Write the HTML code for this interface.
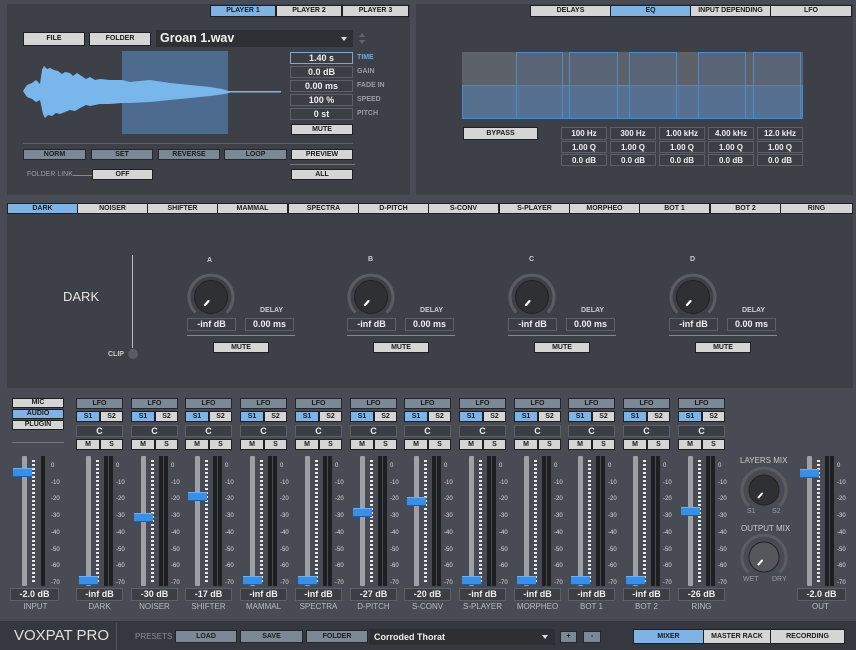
<!DOCTYPE html><html><head><meta charset="utf-8"><style>
*{margin:0;padding:0;box-sizing:border-box}
body{width:856px;height:650px;background:#484b53;position:relative;overflow:hidden;font-family:"Liberation Sans",sans-serif}
div,span{position:absolute}
.p{background:#3d4047}
.b{background:#d5d5d5;border:1px solid #1f2024;color:#1a1a1a;font-size:7px;font-weight:bold;text-align:center;line-height:9px}
.bl{background:#80b2e2}
.g{background:#7b8896;border:1px solid #25272b;color:#1a1a1a;font-size:7px;font-weight:bold;text-align:center;line-height:9px}
.v{border:1px solid #5d6067;color:#eee;font-size:9px;font-weight:bold;text-align:center;line-height:11px;background:#3b3e45}
.l{color:#9a9da3;font-size:7px;font-weight:bold}
.ch{top:0;width:47px;height:620px}
.trk{left:10px;top:456px;width:5px;height:130px;background:#9da0a5;border-radius:1px}
.dots{left:20px;top:460px;width:3px;height:122px;background:repeating-linear-gradient(#e8e8e8 0 2px,transparent 2px 4px)}
.m1{left:28px;top:456px;width:4px;height:130px;background:#1e1f23}
.m2{left:33px;top:456px;width:4px;height:130px;background:#1e1f23}
.sc{left:40px;top:458px;width:20px;color:#ddd;font-size:6px;line-height:16.7px}
.h{left:3px;width:19px;height:9px;background:#3a8ee6;border-top:1px solid #6fb0f0;border-bottom:1px solid #1d5ea8}
.nm{left:-12px;width:71px;top:602px;text-align:center;color:#b8bbc0;font-size:8px}
</style></head><body>

<!-- top left panel -->
<div class="p" style="left:7px;top:4px;width:403px;height:191px"></div>
<div class="b bl" style="left:210px;top:5px;width:66px;height:12px">PLAYER 1</div>
<div class="b" style="left:276px;top:5px;width:66px;height:12px">PLAYER 2</div>
<div class="b" style="left:342px;top:5px;width:67px;height:12px">PLAYER 3</div>
<div class="b" style="left:23px;top:32px;width:62px;height:14px;line-height:12px">FILE</div>
<div class="b" style="left:89px;top:32px;width:62px;height:14px;line-height:12px">FOLDER</div>
<div style="left:156px;top:30px;width:197px;height:17px;background:#2e3035;color:#f2f2f2;font-size:12.5px;font-weight:bold;line-height:17px;padding-left:4px">Groan 1.wav</div>
<div style="left:341px;top:37px;width:0;height:0;border-left:3px solid transparent;border-right:3px solid transparent;border-top:4px solid #ddd"></div>
<div style="left:359px;top:33px;width:0;height:0;border-left:3px solid transparent;border-right:3px solid transparent;border-bottom:4px solid #666"></div>
<div style="left:359px;top:40px;width:0;height:0;border-left:3px solid transparent;border-right:3px solid transparent;border-top:4px solid #666"></div>
<div style="left:122px;top:51px;width:106px;height:83px;background:#4c6b8f"></div>
<svg style="position:absolute;left:0;top:0" width="300" height="150">
<path fill="#79b6ec" d="M23,91 L27,85 L32,83 L36,80 L40,84 L42,70 L44,66 L47,69 L50,68 L54,70 L58,71 L62,74 L65,72 L70,73 L73,76 L77,73 L80,75 L86,79 L90,77 L95,80 L100,79 L110,80 L122,80 L130,82 L150,80 L170,83 L190,85 L210,87 L222,89 L232,92 L225,94 L210,96 L190,98 L170,100 L150,102 L130,103 L122,103 L110,104 L100,104 L90,106 L86,105 L80,108 L75,111 L70,110 L65,112 L60,114 L56,113 L52,116 L48,115 L45,118 L43,114 L40,100 L36,102 L32,99 L27,97 Z"/>
<rect x="228" y="91" width="53" height="1.5" fill="#79b6ec"/>
</svg>
<div class="v" style="left:290px;top:52px;width:63px;height:12px;border-color:#7aa9d6">1.40 s</div>
<div class="v" style="left:290px;top:66px;width:63px;height:12px">0.0 dB</div>
<div class="v" style="left:290px;top:80px;width:63px;height:12px">0.00 ms</div>
<div class="v" style="left:290px;top:94px;width:63px;height:12px">100 %</div>
<div class="v" style="left:290px;top:108px;width:63px;height:12px">0 st</div>
<div class="l" style="left:357px;top:54px;color:#6fa8e0">TIME</div>
<div class="l" style="left:357px;top:68px">GAIN</div>
<div class="l" style="left:357px;top:82px">FADE IN</div>
<div class="l" style="left:357px;top:96px">SPEED</div>
<div class="l" style="left:357px;top:110px">PITCH</div>
<div class="b" style="left:291px;top:124px;width:62px;height:11px">MUTE</div>
<div style="left:23px;top:143px;width:330px;height:1px;background:#5d6067"></div>
<div class="g" style="left:23px;top:149px;width:63px;height:11px">NORM</div>
<div class="g" style="left:91px;top:149px;width:62px;height:11px">SET</div>
<div class="g" style="left:158px;top:149px;width:62px;height:11px">REVERSE</div>
<div class="g" style="left:224px;top:149px;width:63px;height:11px">LOOP</div>
<div class="b" style="left:291px;top:149px;width:62px;height:11px">PREVIEW</div>
<div style="left:290px;top:164px;width:65px;height:1px;background:#777"></div>
<div class="l" style="left:27px;top:171px;font-weight:normal;font-size:7px">FOLDER LINK</div>
<div style="left:73px;top:175px;width:20px;height:1px;background:#888"></div>
<div class="b" style="left:92px;top:169px;width:61px;height:11px">OFF</div>
<div class="b" style="left:291px;top:169px;width:62px;height:11px">ALL</div>

<!-- top right panel -->
<div class="p" style="left:416px;top:4px;width:437px;height:191px"></div>
<div class="b" style="left:530px;top:5px;width:81px;height:12px">DELAYS</div>
<div class="b bl" style="left:610px;top:5px;width:81px;height:12px">EQ</div>
<div class="b" style="left:690px;top:5px;width:81px;height:12px">INPUT DEPENDING</div>
<div class="b" style="left:770px;top:5px;width:82px;height:12px">LFO</div>
<div style="left:462px;top:52px;width:341px;height:33px;background:#5d6168"></div>
<div style="left:462px;top:85px;width:341px;height:34px;background:#57708f;border:1px solid #4a8ad0"></div>
<div style="left:516px;top:52px;width:47px;height:67px;border:1px solid #4a8ad0;background:rgba(80,110,150,.25)"></div>
<div style="left:569px;top:52px;width:49px;height:67px;border:1px solid #4a8ad0;background:rgba(80,110,150,.25)"></div>
<div style="left:629px;top:52px;width:48px;height:67px;border:1px solid #4a8ad0;background:rgba(80,110,150,.25)"></div>
<div style="left:698px;top:52px;width:48px;height:67px;border:1px solid #4a8ad0;background:rgba(80,110,150,.25)"></div>
<div style="left:753px;top:52px;width:48px;height:67px;border:1px solid #4a8ad0;background:rgba(80,110,150,.25)"></div>
<div class="b" style="left:463px;top:127px;width:75px;height:13px;line-height:11px">BYPASS</div>
<div class="v" style="left:561px;top:127px;width:46px;height:13px;font-size:8px">100 Hz</div>
<div class="v" style="left:610px;top:127px;width:46px;height:13px;font-size:8px">300 Hz</div>
<div class="v" style="left:659px;top:127px;width:46px;height:13px;font-size:8px">1.00 kHz</div>
<div class="v" style="left:708px;top:127px;width:46px;height:13px;font-size:8px">4.00 kHz</div>
<div class="v" style="left:757px;top:127px;width:46px;height:13px;font-size:8px">12.0 kHz</div>
<div class="v" style="left:561px;top:141px;width:46px;height:12px;font-size:8px">1.00 Q</div>
<div class="v" style="left:610px;top:141px;width:46px;height:12px;font-size:8px">1.00 Q</div>
<div class="v" style="left:659px;top:141px;width:46px;height:12px;font-size:8px">1.00 Q</div>
<div class="v" style="left:708px;top:141px;width:46px;height:12px;font-size:8px">1.00 Q</div>
<div class="v" style="left:757px;top:141px;width:46px;height:12px;font-size:8px">1.00 Q</div>
<div class="v" style="left:561px;top:154px;width:46px;height:12px;font-size:8px">0.0 dB</div>
<div class="v" style="left:610px;top:154px;width:46px;height:12px;font-size:8px">0.0 dB</div>
<div class="v" style="left:659px;top:154px;width:46px;height:12px;font-size:8px">0.0 dB</div>
<div class="v" style="left:708px;top:154px;width:46px;height:12px;font-size:8px">0.0 dB</div>
<div class="v" style="left:757px;top:154px;width:46px;height:12px;font-size:8px">0.0 dB</div>

<!-- module panel -->
<div class="p" style="left:7px;top:203px;width:846px;height:185px"></div>
<div class="b bl" style="left:7px;top:203px;width:71px;height:11px">DARK</div>
<div class="b" style="left:77px;top:203px;width:71px;height:11px">NOISER</div>
<div class="b" style="left:147px;top:203px;width:71px;height:11px">SHIFTER</div>
<div class="b" style="left:217px;top:203px;width:71px;height:11px">MAMMAL</div>
<div class="b" style="left:288px;top:203px;width:71px;height:11px">SPECTRA</div>
<div class="b" style="left:358px;top:203px;width:71px;height:11px">D-PITCH</div>
<div class="b" style="left:428px;top:203px;width:71px;height:11px">S-CONV</div>
<div class="b" style="left:499px;top:203px;width:71px;height:11px">S-PLAYER</div>
<div class="b" style="left:569px;top:203px;width:71px;height:11px">MORPHEO</div>
<div class="b" style="left:639px;top:203px;width:71px;height:11px">BOT 1</div>
<div class="b" style="left:710px;top:203px;width:71px;height:11px">BOT 2</div>
<div class="b" style="left:780px;top:203px;width:73px;height:11px">RING</div>
<div style="left:63px;top:289px;color:#e6e6e6;font-size:13px">DARK</div>
<div style="left:132px;top:255px;width:1px;height:93px;background:#bbb"></div>
<div class="l" style="left:108px;top:351px;color:#ccc">CLIP</div>
<div style="left:128px;top:349px;width:10px;height:10px;border-radius:50%;background:#5a5c62"></div>

<svg style="position:absolute;left:0;top:0" width="856" height="650">
<defs><g id="kn"><path d="M-15.6,15.6 A22,22 0 1 1 15.6,15.6" fill="none" stroke="#5b5d62" stroke-width="3"/><circle r="16.5" fill="#2f3034" stroke="#222" stroke-width="1"/><line x1="-2.5" y1="4" x2="-6" y2="8" stroke="#fff" stroke-width="2.2" stroke-linecap="round"/></g>
<g id="kn2"><path d="M-15.6,15.6 A22,22 0 1 1 15.6,15.6" fill="none" stroke="#5b5d62" stroke-width="3"/><circle r="15" fill="#2f3034" stroke="#222"/><line x1="-2" y1="3.5" x2="-5.5" y2="7.5" stroke="#fff" stroke-width="2" stroke-linecap="round"/></g>
<g id="kn3"><path d="M-15.6,15.6 A22,22 0 1 1 15.6,15.6" fill="none" stroke="#5b5d62" stroke-width="3"/><circle r="15" fill="#55575c" stroke="#222"/><line x1="-2" y1="3.5" x2="-5.5" y2="7.5" stroke="#fff" stroke-width="2" stroke-linecap="round"/></g></defs>
<use href="#kn" x="211" y="297"/><use href="#kn" x="371" y="297"/><use href="#kn" x="532" y="297"/><use href="#kn" x="693" y="297"/>
<use href="#kn2" x="764" y="490"/><use href="#kn3" x="764" y="557"/>
</svg>

<div class="l" style="left:207px;top:257px;color:#ccc">A</div>
<div class="l" style="left:368px;top:256px;color:#ccc">B</div>
<div class="l" style="left:529px;top:256px;color:#ccc">C</div>
<div class="l" style="left:690px;top:256px;color:#ccc">D</div>

<div class="l" style="left:260px;top:307px;color:#ccc">DELAY</div>
<div class="v" style="left:187px;top:318px;width:49px;height:13px">-inf dB</div>
<div class="v" style="left:245px;top:318px;width:49px;height:13px">0.00 ms</div>
<div style="left:187px;top:335px;width:108px;height:1px;background:#888"></div>
<div class="b" style="left:213px;top:342px;width:56px;height:11px">MUTE</div>

<div class="l" style="left:420px;top:307px;color:#ccc">DELAY</div>
<div class="v" style="left:347px;top:318px;width:49px;height:13px">-inf dB</div>
<div class="v" style="left:405px;top:318px;width:49px;height:13px">0.00 ms</div>
<div style="left:347px;top:335px;width:108px;height:1px;background:#888"></div>
<div class="b" style="left:373px;top:342px;width:56px;height:11px">MUTE</div>

<div class="l" style="left:581px;top:307px;color:#ccc">DELAY</div>
<div class="v" style="left:508px;top:318px;width:49px;height:13px">-inf dB</div>
<div class="v" style="left:566px;top:318px;width:49px;height:13px">0.00 ms</div>
<div style="left:508px;top:335px;width:108px;height:1px;background:#888"></div>
<div class="b" style="left:534px;top:342px;width:56px;height:11px">MUTE</div>

<div class="l" style="left:742px;top:307px;color:#ccc">DELAY</div>
<div class="v" style="left:669px;top:318px;width:49px;height:13px">-inf dB</div>
<div class="v" style="left:727px;top:318px;width:49px;height:13px">0.00 ms</div>
<div style="left:669px;top:335px;width:108px;height:1px;background:#888"></div>
<div class="b" style="left:695px;top:342px;width:56px;height:11px">MUTE</div>

<!-- mixer -->
<div class="b" style="left:12px;top:398px;width:52px;height:10px;line-height:8px">MIC</div>
<div class="b bl" style="left:12px;top:409px;width:52px;height:10px;line-height:8px">AUDIO</div>
<div class="b" style="left:12px;top:420px;width:52px;height:10px;line-height:8px">PLUGIN</div>
<div style="left:12px;top:442px;width:52px;height:1px;background:#777"></div>

<!-- input strip -->
<div class="ch" style="left:12px">
<div class="trk"></div><div class="dots"></div><div class="m1" style="left:29px"></div>
<div class="sc" style="left:39px">0<br>-10<br>-20<br>-30<br>-40<br>-50<br>-60<br>-70</div>
<div class="h" style="left:1px;top:468px"></div>
<div class="v" style="left:-2px;top:588px;width:49px;height:13px">-2.0 dB</div>
<div class="nm">INPUT</div></div>

<!-- channels -->
<div class="ch" style="left:76px"><div class="g" style="left:0;top:398px;width:47px;height:11px">LFO</div><div class="b bl" style="left:0;top:411px;width:24px;height:11px">S1</div><div class="b" style="left:24px;top:411px;width:23px;height:11px">S2</div><div class="v" style="left:0;top:425px;width:47px;height:12px">C</div><div class="b" style="left:0;top:439px;width:24px;height:11px">M</div><div class="b" style="left:24px;top:439px;width:23px;height:11px">S</div><div class="trk"></div><div class="dots"></div><div class="m1"></div><div class="m2"></div><div class="sc">0<br>-10<br>-20<br>-30<br>-40<br>-50<br>-60<br>-70</div><div class="h" style="top:576px"></div><div class="v" style="left:0;top:588px;width:47px;height:13px">-inf dB</div><div class="nm">DARK</div></div>

<div class="ch" style="left:131px"><div class="g" style="left:0;top:398px;width:47px;height:11px">LFO</div><div class="b bl" style="left:0;top:411px;width:24px;height:11px">S1</div><div class="b" style="left:24px;top:411px;width:23px;height:11px">S2</div><div class="v" style="left:0;top:425px;width:47px;height:12px">C</div><div class="b" style="left:0;top:439px;width:24px;height:11px">M</div><div class="b" style="left:24px;top:439px;width:23px;height:11px">S</div><div class="trk"></div><div class="dots"></div><div class="m1"></div><div class="m2"></div><div class="sc">0<br>-10<br>-20<br>-30<br>-40<br>-50<br>-60<br>-70</div><div class="h" style="top:513px"></div><div class="v" style="left:0;top:588px;width:47px;height:13px">-30 dB</div><div class="nm">NOISER</div></div>

<div class="ch" style="left:185px"><div class="g" style="left:0;top:398px;width:47px;height:11px">LFO</div><div class="b bl" style="left:0;top:411px;width:24px;height:11px">S1</div><div class="b" style="left:24px;top:411px;width:23px;height:11px">S2</div><div class="v" style="left:0;top:425px;width:47px;height:12px">C</div><div class="b" style="left:0;top:439px;width:24px;height:11px">M</div><div class="b" style="left:24px;top:439px;width:23px;height:11px">S</div><div class="trk"></div><div class="dots"></div><div class="m1"></div><div class="m2"></div><div class="sc">0<br>-10<br>-20<br>-30<br>-40<br>-50<br>-60<br>-70</div><div class="h" style="top:492px"></div><div class="v" style="left:0;top:588px;width:47px;height:13px">-17 dB</div><div class="nm">SHIFTER</div></div>

<div class="ch" style="left:240px"><div class="g" style="left:0;top:398px;width:47px;height:11px">LFO</div><div class="b bl" style="left:0;top:411px;width:24px;height:11px">S1</div><div class="b" style="left:24px;top:411px;width:23px;height:11px">S2</div><div class="v" style="left:0;top:425px;width:47px;height:12px">C</div><div class="b" style="left:0;top:439px;width:24px;height:11px">M</div><div class="b" style="left:24px;top:439px;width:23px;height:11px">S</div><div class="trk"></div><div class="dots"></div><div class="m1"></div><div class="m2"></div><div class="sc">0<br>-10<br>-20<br>-30<br>-40<br>-50<br>-60<br>-70</div><div class="h" style="top:576px"></div><div class="v" style="left:0;top:588px;width:47px;height:13px">-inf dB</div><div class="nm">MAMMAL</div></div>

<div class="ch" style="left:295px"><div class="g" style="left:0;top:398px;width:47px;height:11px">LFO</div><div class="b bl" style="left:0;top:411px;width:24px;height:11px">S1</div><div class="b" style="left:24px;top:411px;width:23px;height:11px">S2</div><div class="v" style="left:0;top:425px;width:47px;height:12px">C</div><div class="b" style="left:0;top:439px;width:24px;height:11px">M</div><div class="b" style="left:24px;top:439px;width:23px;height:11px">S</div><div class="trk"></div><div class="dots"></div><div class="m1"></div><div class="m2"></div><div class="sc">0<br>-10<br>-20<br>-30<br>-40<br>-50<br>-60<br>-70</div><div class="h" style="top:576px"></div><div class="v" style="left:0;top:588px;width:47px;height:13px">-inf dB</div><div class="nm">SPECTRA</div></div>

<div class="ch" style="left:350px"><div class="g" style="left:0;top:398px;width:47px;height:11px">LFO</div><div class="b bl" style="left:0;top:411px;width:24px;height:11px">S1</div><div class="b" style="left:24px;top:411px;width:23px;height:11px">S2</div><div class="v" style="left:0;top:425px;width:47px;height:12px">C</div><div class="b" style="left:0;top:439px;width:24px;height:11px">M</div><div class="b" style="left:24px;top:439px;width:23px;height:11px">S</div><div class="trk"></div><div class="dots"></div><div class="m1"></div><div class="m2"></div><div class="sc">0<br>-10<br>-20<br>-30<br>-40<br>-50<br>-60<br>-70</div><div class="h" style="top:508px"></div><div class="v" style="left:0;top:588px;width:47px;height:13px">-27 dB</div><div class="nm">D-PITCH</div></div>

<div class="ch" style="left:404px"><div class="g" style="left:0;top:398px;width:47px;height:11px">LFO</div><div class="b bl" style="left:0;top:411px;width:24px;height:11px">S1</div><div class="b" style="left:24px;top:411px;width:23px;height:11px">S2</div><div class="v" style="left:0;top:425px;width:47px;height:12px">C</div><div class="b" style="left:0;top:439px;width:24px;height:11px">M</div><div class="b" style="left:24px;top:439px;width:23px;height:11px">S</div><div class="trk"></div><div class="dots"></div><div class="m1"></div><div class="m2"></div><div class="sc">0<br>-10<br>-20<br>-30<br>-40<br>-50<br>-60<br>-70</div><div class="h" style="top:497px"></div><div class="v" style="left:0;top:588px;width:47px;height:13px">-20 dB</div><div class="nm">S-CONV</div></div>

<div class="ch" style="left:459px"><div class="g" style="left:0;top:398px;width:47px;height:11px">LFO</div><div class="b bl" style="left:0;top:411px;width:24px;height:11px">S1</div><div class="b" style="left:24px;top:411px;width:23px;height:11px">S2</div><div class="v" style="left:0;top:425px;width:47px;height:12px">C</div><div class="b" style="left:0;top:439px;width:24px;height:11px">M</div><div class="b" style="left:24px;top:439px;width:23px;height:11px">S</div><div class="trk"></div><div class="dots"></div><div class="m1"></div><div class="m2"></div><div class="sc">0<br>-10<br>-20<br>-30<br>-40<br>-50<br>-60<br>-70</div><div class="h" style="top:576px"></div><div class="v" style="left:0;top:588px;width:47px;height:13px">-inf dB</div><div class="nm">S-PLAYER</div></div>

<div class="ch" style="left:514px"><div class="g" style="left:0;top:398px;width:47px;height:11px">LFO</div><div class="b bl" style="left:0;top:411px;width:24px;height:11px">S1</div><div class="b" style="left:24px;top:411px;width:23px;height:11px">S2</div><div class="v" style="left:0;top:425px;width:47px;height:12px">C</div><div class="b" style="left:0;top:439px;width:24px;height:11px">M</div><div class="b" style="left:24px;top:439px;width:23px;height:11px">S</div><div class="trk"></div><div class="dots"></div><div class="m1"></div><div class="m2"></div><div class="sc">0<br>-10<br>-20<br>-30<br>-40<br>-50<br>-60<br>-70</div><div class="h" style="top:576px"></div><div class="v" style="left:0;top:588px;width:47px;height:13px">-inf dB</div><div class="nm">MORPHEO</div></div>

<div class="ch" style="left:568px"><div class="g" style="left:0;top:398px;width:47px;height:11px">LFO</div><div class="b bl" style="left:0;top:411px;width:24px;height:11px">S1</div><div class="b" style="left:24px;top:411px;width:23px;height:11px">S2</div><div class="v" style="left:0;top:425px;width:47px;height:12px">C</div><div class="b" style="left:0;top:439px;width:24px;height:11px">M</div><div class="b" style="left:24px;top:439px;width:23px;height:11px">S</div><div class="trk"></div><div class="dots"></div><div class="m1"></div><div class="m2"></div><div class="sc">0<br>-10<br>-20<br>-30<br>-40<br>-50<br>-60<br>-70</div><div class="h" style="top:576px"></div><div class="v" style="left:0;top:588px;width:47px;height:13px">-inf dB</div><div class="nm">BOT 1</div></div>

<div class="ch" style="left:623px"><div class="g" style="left:0;top:398px;width:47px;height:11px">LFO</div><div class="b bl" style="left:0;top:411px;width:24px;height:11px">S1</div><div class="b" style="left:24px;top:411px;width:23px;height:11px">S2</div><div class="v" style="left:0;top:425px;width:47px;height:12px">C</div><div class="b" style="left:0;top:439px;width:24px;height:11px">M</div><div class="b" style="left:24px;top:439px;width:23px;height:11px">S</div><div class="trk"></div><div class="dots"></div><div class="m1"></div><div class="m2"></div><div class="sc">0<br>-10<br>-20<br>-30<br>-40<br>-50<br>-60<br>-70</div><div class="h" style="top:576px"></div><div class="v" style="left:0;top:588px;width:47px;height:13px">-inf dB</div><div class="nm">BOT 2</div></div>

<div class="ch" style="left:678px"><div class="g" style="left:0;top:398px;width:47px;height:11px">LFO</div><div class="b bl" style="left:0;top:411px;width:24px;height:11px">S1</div><div class="b" style="left:24px;top:411px;width:23px;height:11px">S2</div><div class="v" style="left:0;top:425px;width:47px;height:12px">C</div><div class="b" style="left:0;top:439px;width:24px;height:11px">M</div><div class="b" style="left:24px;top:439px;width:23px;height:11px">S</div><div class="trk"></div><div class="dots"></div><div class="m1"></div><div class="m2"></div><div class="sc">0<br>-10<br>-20<br>-30<br>-40<br>-50<br>-60<br>-70</div><div class="h" style="top:507px"></div><div class="v" style="left:0;top:588px;width:47px;height:13px">-26 dB</div><div class="nm">RING</div></div>

<!-- mix knobs labels -->
<div style="left:740px;top:456px;color:#c8cbd0;font-size:8px">LAYERS MIX</div>
<div style="left:747px;top:508px;color:#9a9da3;font-size:7px">S1</div>
<div style="left:772px;top:508px;color:#9a9da3;font-size:7px">S2</div>
<div style="left:741px;top:524px;color:#c8cbd0;font-size:8px">OUTPUT MIX</div>
<div style="left:743px;top:576px;color:#9a9da3;font-size:7px">WET</div>
<div style="left:772px;top:576px;color:#9a9da3;font-size:7px">DRY</div>

<!-- out strip -->
<div class="ch" style="left:797px">
<div class="trk"></div><div class="dots"></div><div class="m1"></div><div class="m2"></div>
<div class="sc">0<br>-10<br>-20<br>-30<br>-40<br>-50<br>-60<br>-70</div>
<div class="h" style="top:469px"></div>
<div class="v" style="left:0;top:588px;width:49px;height:13px">-2.0 dB</div>
<div class="nm">OUT</div></div>

<!-- bottom bar -->
<div style="left:0;top:621px;width:856px;height:29px;background:#35383e"></div>
<div style="left:14px;top:627px;color:#e0e0e0;font-size:15px">VOXPAT PRO</div>
<div style="left:116px;top:623px;width:1px;height:27px;background:#55585e"></div>
<div style="left:135px;top:632px;color:#8a8d93;font-size:8px">PRESETS</div>
<div class="g" style="left:175px;top:630px;width:62px;height:13px;line-height:11px">LOAD</div>
<div class="g" style="left:240px;top:630px;width:63px;height:13px;line-height:11px">SAVE</div>
<div class="g" style="left:306px;top:630px;width:62px;height:13px;line-height:11px">FOLDER</div>
<div style="left:369px;top:629px;width:186px;height:16px;background:#2d2f34;color:#eee;font-size:9px;font-weight:bold;line-height:16px;padding-left:5px">Corroded Thorat</div>
<div style="left:542px;top:635px;width:0;height:0;border-left:3px solid transparent;border-right:3px solid transparent;border-top:4px solid #ddd"></div>
<div class="g" style="left:560px;top:631px;width:17px;height:12px;line-height:10px">+</div>
<div class="g" style="left:583px;top:631px;width:18px;height:12px;line-height:10px">-</div>
<div class="b bl" style="left:633px;top:629px;width:71px;height:15px;line-height:13px">MIXER</div>
<div class="b" style="left:703px;top:629px;width:68px;height:15px;line-height:13px">MASTER RACK</div>
<div class="b" style="left:770px;top:629px;width:75px;height:15px;line-height:13px">RECORDING</div>
</body></html>
